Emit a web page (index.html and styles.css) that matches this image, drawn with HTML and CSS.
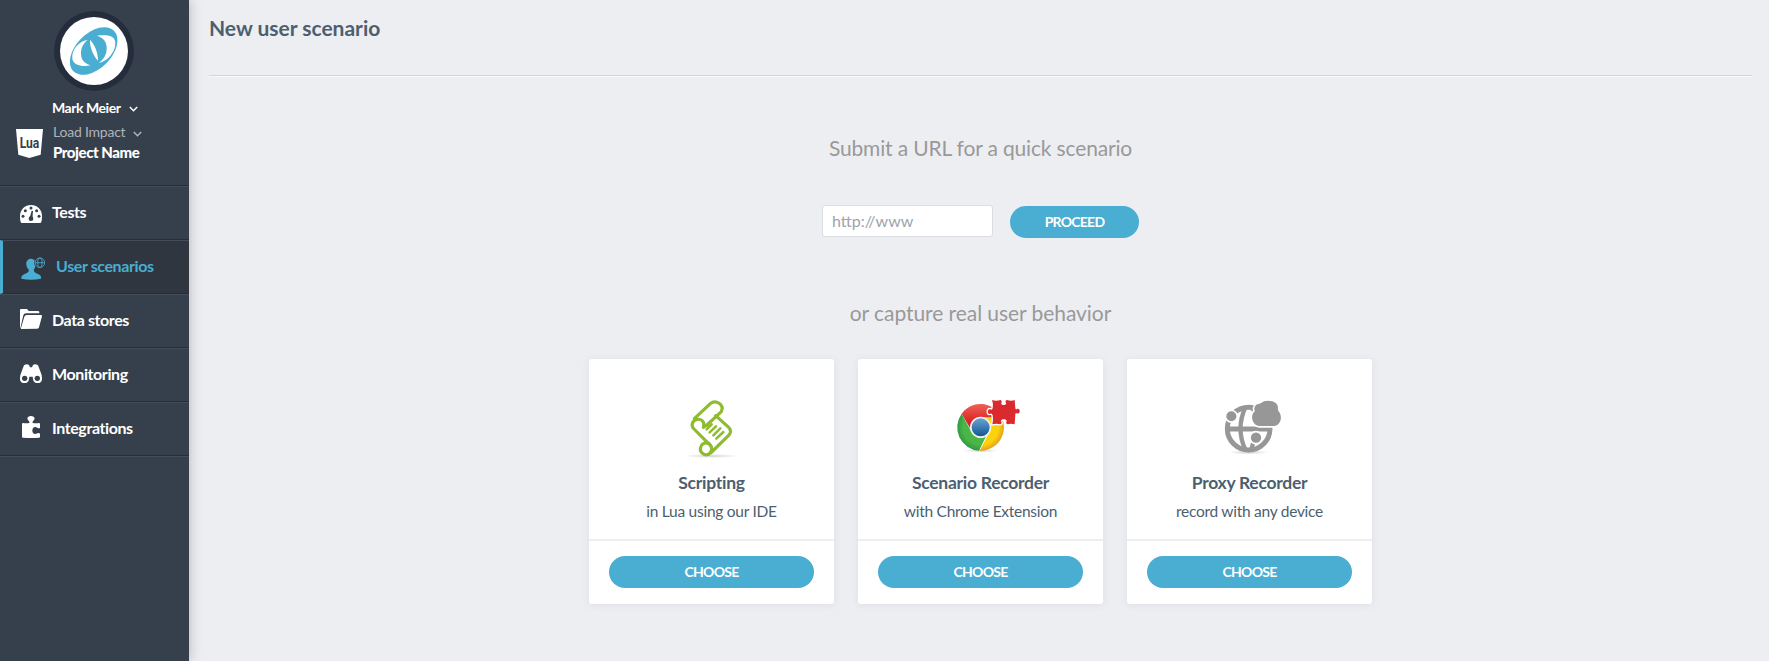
FILE: index.html
```html
<!DOCTYPE html>
<html lang="en">
<head>
<meta charset="utf-8">
<title>New user scenario</title>
<link rel="stylesheet" href="styles.css">
</head>
<body>
<div class="app">
  <aside class="sidebar">
    <div class="profile">
      <svg class="avatar" viewBox="162 33 240 240">
        <circle cx="282" cy="153" r="120" fill="#252d3d"/>
        <circle cx="282" cy="153" r="102" fill="#fff"/>
        <ellipse cx="281" cy="153" rx="86" ry="53" transform="rotate(-45 281 153)" fill="#4aadd2"/>
        <path d="M263 120C234 124 214 152 217 176C220 196 246 201 272 196C250 190 243 177 243 160C243 143 250 130 263 120Z" fill="#fff"/>
        <path d="M291 107C318 104 345 105 346 128C347 155 324 183 296 189C313 178 321 160 320 141C319 123 308 112 291 107Z" fill="#fff"/>
        <path d="M270 119C284 133 294 158 294 182C279 166 269 142 270 119Z" fill="#fff"/>
      </svg>
      <div class="user">
        <span class="user-name">Mark Meier</span>
        <svg class="chevron" viewBox="0 0 9 6"><path d="M.8 1L4.500 4.700L8.200 1" fill="none" stroke="#fff" stroke-width="1.500"/></svg>
      </div>
      <div class="project">
        <svg class="lua" viewBox="48 387 81 87">
          <path d="M48 387H129L122 464L88 474L55 464Z" fill="#fff"/>
          <text class="lua-text" x="59" y="445" textLength="59" lengthAdjust="spacingAndGlyphs">Lua</text>
        </svg>
        <div class="project-text">
          <div class="org"><span class="org-name">Load Impact</span>
            <svg class="chevron" viewBox="0 0 9 6"><path d="M.8 1L4.500 4.700L8.200 1" fill="none" stroke="#b0b3b7" stroke-width="1.500"/></svg>
          </div>
          <div class="project-name">Project Name</div>
        </div>
      </div>
    </div>
    <nav class="nav">
      <a class="nav-item">
        <svg class="icon-tests" viewBox="60 90 66 54">
          <path d="M64 144C60 138 60 130 60 123C60 104 75 90 93 90S126 104 126 123C126 130 126 138 122 144Z" fill="#fff"/>
          <g fill="#36404c"><circle cx="93" cy="99" r="4.500"/><circle cx="76" cy="107" r="4.500"/><circle cx="110" cy="107" r="4.500"/><circle cx="69" cy="124" r="4.500"/><circle cx="117" cy="124" r="4.500"/><circle cx="93" cy="131" r="7"/><path d="M89 129L95 107L99 108L97 132Z"/></g>
        </svg>
        <span class="label">Tests</span>
      </a>
      <a class="nav-item active">
        <svg class="icon-user" viewBox="62 246 73 68">
          <path d="M93 250C103 250 108 258 107 267C106 276 103 280 101 284C101 291 105 293 112 296C120 299 124 303 123 311C104 315 82 315 63 311C62 303 67 299 75 296C82 293 86 291 86 284C82 280 79 276 78 267C77 257 84 250 93 250Z" fill="#4aadd2"/>
          <circle cx="119" cy="263" r="17" fill="#2f363f"/>
          <g fill="none" stroke="#4aadd2" stroke-width="2.600"><circle cx="119.500" cy="262.500" r="14.500"/><ellipse cx="119.500" cy="262.500" rx="6.500" ry="14.500"/><path d="M105 262.500H134"/></g>
        </svg>
        <span class="label">User scenarios</span>
      </a>
      <a class="nav-item">
        <svg class="icon-data" viewBox="60 -5 66 60">
          <path d="M60 52V-2Q60 -5 63 -5H81L86 1H114Q118 1 118 5V8H78Q72 8 70 14L61 53Z" fill="#fff"/>
          <path d="M80 13H123Q127 13 126 17L117 50Q116 54 112 54L64 55Q62 54 63 52L73 18Q75 13 80 13Z" fill="#fff"/>
        </svg>
        <span class="label">Data stores</span>
      </a>
      <a class="nav-item">
        <svg class="icon-mon" viewBox="60 158 66 57">
          <path d="M72 162Q80 156 87 161L90 168H96L99 161Q106 156 114 162L122 183Q126 191 126 201A13 13 0 0 1 99 204L98 196H88L87 204A13 13 0 0 1 60 201Q60 191 64 183Z" fill="#fff"/>
          <circle cx="74" cy="201" r="8" fill="#36404c"/><circle cx="112" cy="201" r="8" fill="#36404c"/>
        </svg>
        <span class="label">Monitoring</span>
      </a>
      <a class="nav-item">
        <svg class="icon-int" viewBox="66 315 54 66">
          <path d="M66 339Q66 336 69 336Q79 338 88 336Q90 332 84 327C79 320 85 315 93 315S107 320 102 327Q96 332 98 336Q108 338 117 336Q120 336 120 339V350Q118 354 112 350C102 345 97 352 97 359S103 372 112 367Q118 364 120 369V377Q120 380 117 380Q93 382 69 380Q66 380 66 377Z" fill="#fff"/>
        </svg>
        <span class="label">Integrations</span>
      </a>
    </nav>
  </aside>
  <main class="main">
    <header class="header"><h1 class="title">New user scenario</h1></header>
    <h2 class="lead lead-url">Submit a URL for a quick scenario</h2>
    <form class="url-form">
      <input class="url-input" type="text" placeholder="http://www">
      <button class="btn proceed" type="button">PROCEED</button>
    </form>
    <h2 class="lead lead-capture">or capture real user behavior</h2>
    <section class="cards">
      <article class="card">
        <div class="card-body">
          <svg class="card-icon" viewBox="0 0 270 240">
            <defs><radialGradient id="shade"><stop offset="0" stop-color="#000" stop-opacity=".18"/><stop offset="1" stop-color="#000" stop-opacity="0"/></radialGradient></defs>
            <ellipse cx="123" cy="213" rx="83" ry="6" fill="url(#shade)"/>
            <g fill="none" stroke="#8fbc2f" stroke-width="9.500" stroke-linejoin="round" stroke-linecap="round">
              <path d="M73 101L121 56C137 42 164 59 154 80L111 120"/>
              <path d="M111 120L100 127C106 113 95 101 83 103C66 105 62 122 72 132L109 169"/>
              <path d="M137 92L176 127C184 135 183 144 176 151L122 204C105 217 84 202 94 182C98 173 109 172 118 177C129 187 126 201 116 208"/>
              <path d="M109 169L118 177"/>
              <path d="M110 133L125 118M119 142L138 124M130 151L151 130M139 161L160 141" stroke-width="7.500"/>
            </g>
          </svg>
          <h3 class="card-title">Scripting</h3>
          <p class="card-sub">in Lua using our IDE</p>
        </div>
        <div class="card-foot"><button class="btn" type="button">CHOOSE</button></div>
      </article>
      <article class="card">
        <div class="card-body">
          <svg class="card-icon" viewBox="-3 0 270 240">
            <defs>
              <linearGradient id="red" x1="0" y1="0" x2="0" y2="1"><stop offset="0" stop-color="#ee6355"/><stop offset=".7" stop-color="#d92127"/></linearGradient>
              <linearGradient id="blue" x1="0" y1="0" x2="0" y2="1"><stop offset="0" stop-color="#69a3d5"/><stop offset="1" stop-color="#12568f"/></linearGradient>
              <radialGradient id="yellow" gradientUnits="userSpaceOnUse" cx="122" cy="127" r="70"><stop offset=".75" stop-color="#fbd30d"/><stop offset="1" stop-color="#e5a21c"/></radialGradient>
              <radialGradient id="green" gradientUnits="userSpaceOnUse" cx="122" cy="127" r="70"><stop offset=".75" stop-color="#4bb548"/><stop offset="1" stop-color="#2f9a43"/></radialGradient>
            </defs>
            <ellipse cx="121" cy="197" rx="55" ry="6" fill="url(#shade)"/>
            <path d="M122 97H185A70 70 0 0 1 119 197L148 142Z" fill="url(#yellow)"/>
            <path d="M65 86L95 142L122 157L140 150L117 197A70 70 0 0 1 65 86Z" fill="url(#green)"/>
            <path d="M65 86A70 70 0 0 1 185 97H122Q100 100 93 134Z" fill="url(#red)"/>
            <circle cx="122" cy="127" r="32" fill="#f2f2f0"/><circle cx="122" cy="127" r="27" fill="url(#blue)"/>
            <path d="M156 45Q168 50 182 45Q187 48 184 54C181 62 201 62 198 54Q194 47 201 45Q213 49 224 45L226 70Q227 75 231 72C242 68 242 90 231 85Q225 83 226 88L224 118Q212 114 203 118Q196 116 200 109C201 101 181 101 183 109Q187 116 181 118Q168 114 157 118Q160 105 158 91Q155 84 151 86C141 91 141 69 151 73Q157 76 158 69Q160 56 156 45Z" fill="#db2a2e" stroke="#fff" stroke-width="8" paint-order="stroke" stroke-linejoin="round"/>
          </svg>
          <h3 class="card-title">Scenario Recorder</h3>
          <p class="card-sub">with Chrome Extension</p>
        </div>
        <div class="card-foot"><button class="btn" type="button">CHOOSE</button></div>
      </article>
      <article class="card">
        <div class="card-body">
          <svg class="card-icon" viewBox="36 53 270 240">
            <ellipse cx="158" cy="255" rx="60" ry="7" fill="url(#shade)"/>
            <g fill="none" stroke="#979797" stroke-width="15">
              <circle cx="158" cy="184" r="64"/><path d="M90 185H225"/><path d="M148 120Q119 184 148 247M166 120Q195 150 184 184T166 247" stroke-width="13"/>
            </g>
            <circle cx="106" cy="147" r="20" fill="#fff"/><circle cx="106" cy="147" r="15" fill="#979797"/>
            <circle cx="180" cy="211" r="21" fill="#fff"/><circle cx="180" cy="211" r="15.500" fill="#979797"/>
            <path d="M176 120C180 107 188 112 197 106C204 97 235 97 244 113C248 121 243 127 249 133C260 147 255 174 234 176H190C168 175 161 143 177 131Q173 125 176 120Z" fill="#979797" stroke="#fff" stroke-width="10" paint-order="stroke"/>
          </svg>
          <h3 class="card-title">Proxy Recorder</h3>
          <p class="card-sub">record with any device</p>
        </div>
        <div class="card-foot"><button class="btn" type="button">CHOOSE</button></div>
      </article>
    </section>
  </main>
</div>
</body>
</html>
```

FILE: styles.css
```css
* { box-sizing: border-box; }
body { margin: 0; font-family: Lato, "Open Sans", sans-serif; font-variant-ligatures: none; background: #edeef2; color: #4c5f70; }
h1, h2, h3, p { margin: 0; white-space: nowrap; }
svg { display: block; flex: none; }
.app { display: flex; height: 661px; overflow: hidden; }

.sidebar { width: 189px; flex: none; background: #36404c; color: #fff; box-shadow: 0 0 12px rgba(0, 0, 0, .25); z-index: 1; }
.profile { height: 185px; padding-top: 11px; }
.avatar { width: 80px; height: 80px; margin-left: 54px; }
.user { display: flex; align-items: center; gap: 8px; height: 20px; margin: 6px 0 0 52px; font-size: 14px; font-weight: 700; letter-spacing: -.45px; }
.chevron { width: 9px; height: 6px; margin-top: 4px; }
.project { display: flex; gap: 10px; padding: 4px 0 0 16px; }
.lua { width: 27px; height: 29px; margin-top: 8px; }
.lua-text { font: 700 44px Roboto, sans-serif; fill: #36404c; }
.org { display: flex; align-items: center; gap: 8px; height: 21px; font-size: 14px; letter-spacing: -.22px; color: #b0b3b7; }
.project-name { height: 20px; line-height: 20px; font-size: 15px; font-weight: 900; letter-spacing: -.45px; }

.nav { border-top: 1px solid #262e38; border-bottom: 1px solid #434d59; }
.nav-item { display: flex; align-items: center; height: 54px; padding-left: 20px; border-top: 1px solid #434d59; border-bottom: 1px solid #262e38; font-size: 16px; font-weight: 700; letter-spacing: -.4px; }
.nav-item.active { padding-left: 18px; border-left: 3px solid #4aadd2; background: #2f363f; color: #4aadd2; }
.label { white-space: nowrap; margin-top: -3px; }
.icon-tests { width: 22px; height: 18px; margin: 2px 10px 0 0; }
.icon-user { width: 24px; height: 23px; margin: 2px 11px 0 0; }
.icon-data { width: 22px; height: 20px; margin: -4px 10px 0 0; }
.icon-mon { width: 22px; height: 19px; margin: -3px 10px 0 0; }
.icon-int { width: 18px; height: 22px; margin: -4px 12px 0 2px; }

.main { flex: 1; padding: 0 17px 0 20px; display: flex; flex-direction: column; align-items: center; }
.header { align-self: stretch; height: 77px; padding-top: 14px; border-bottom: 1px solid #f8f8fa; box-shadow: inset 0 -1px #d3d5da; }
.title { font-size: 21px; line-height: 28px; font-weight: 700; }
.lead { font-size: 21px; line-height: 28px; font-weight: 400; color: #999; }
.lead-url { margin-top: 57px; letter-spacing: -.16px; }
.url-form { display: flex; gap: 17px; margin-top: 43px; }
.url-input { width: 171px; height: 32px; padding: 0 9px 2px; border: 1px solid #dadde2; border-radius: 3px; background: #fff; font: 16px Lato, sans-serif; }
.url-input::placeholder { color: #9da4aa; opacity: 1; }
.btn { display: block; width: 205px; height: 32px; padding: 0; border: 0; border-radius: 16px; background: #4aadd2; color: #fff; font: 700 14px/32px Lato, sans-serif; letter-spacing: -.75px; }
.proceed { width: 129px; margin-top: 1px; }
.lead-capture { margin-top: 61px; letter-spacing: -.06px; }
.cards { display: flex; gap: 24px; margin-top: 32px; }
.card { width: 245px; height: 245px; border-radius: 3px; background: #fff; box-shadow: 0 1px 8px rgba(60, 70, 90, .08); }
.card-body { height: 182px; padding-top: 26px; border-bottom: 2px solid #edeef2; text-align: center; }
.card-icon { width: 90px; height: 80px; margin-left: 81px; }
.card-title { font-size: 17.5px; line-height: 24px; margin-top: 6px; font-weight: 700; letter-spacing: -.27px; }
.card-sub { font-size: 15.5px; line-height: 22px; margin-top: 5px; letter-spacing: -.27px; }
.card-foot { padding: 15px 20px 0; }
```
